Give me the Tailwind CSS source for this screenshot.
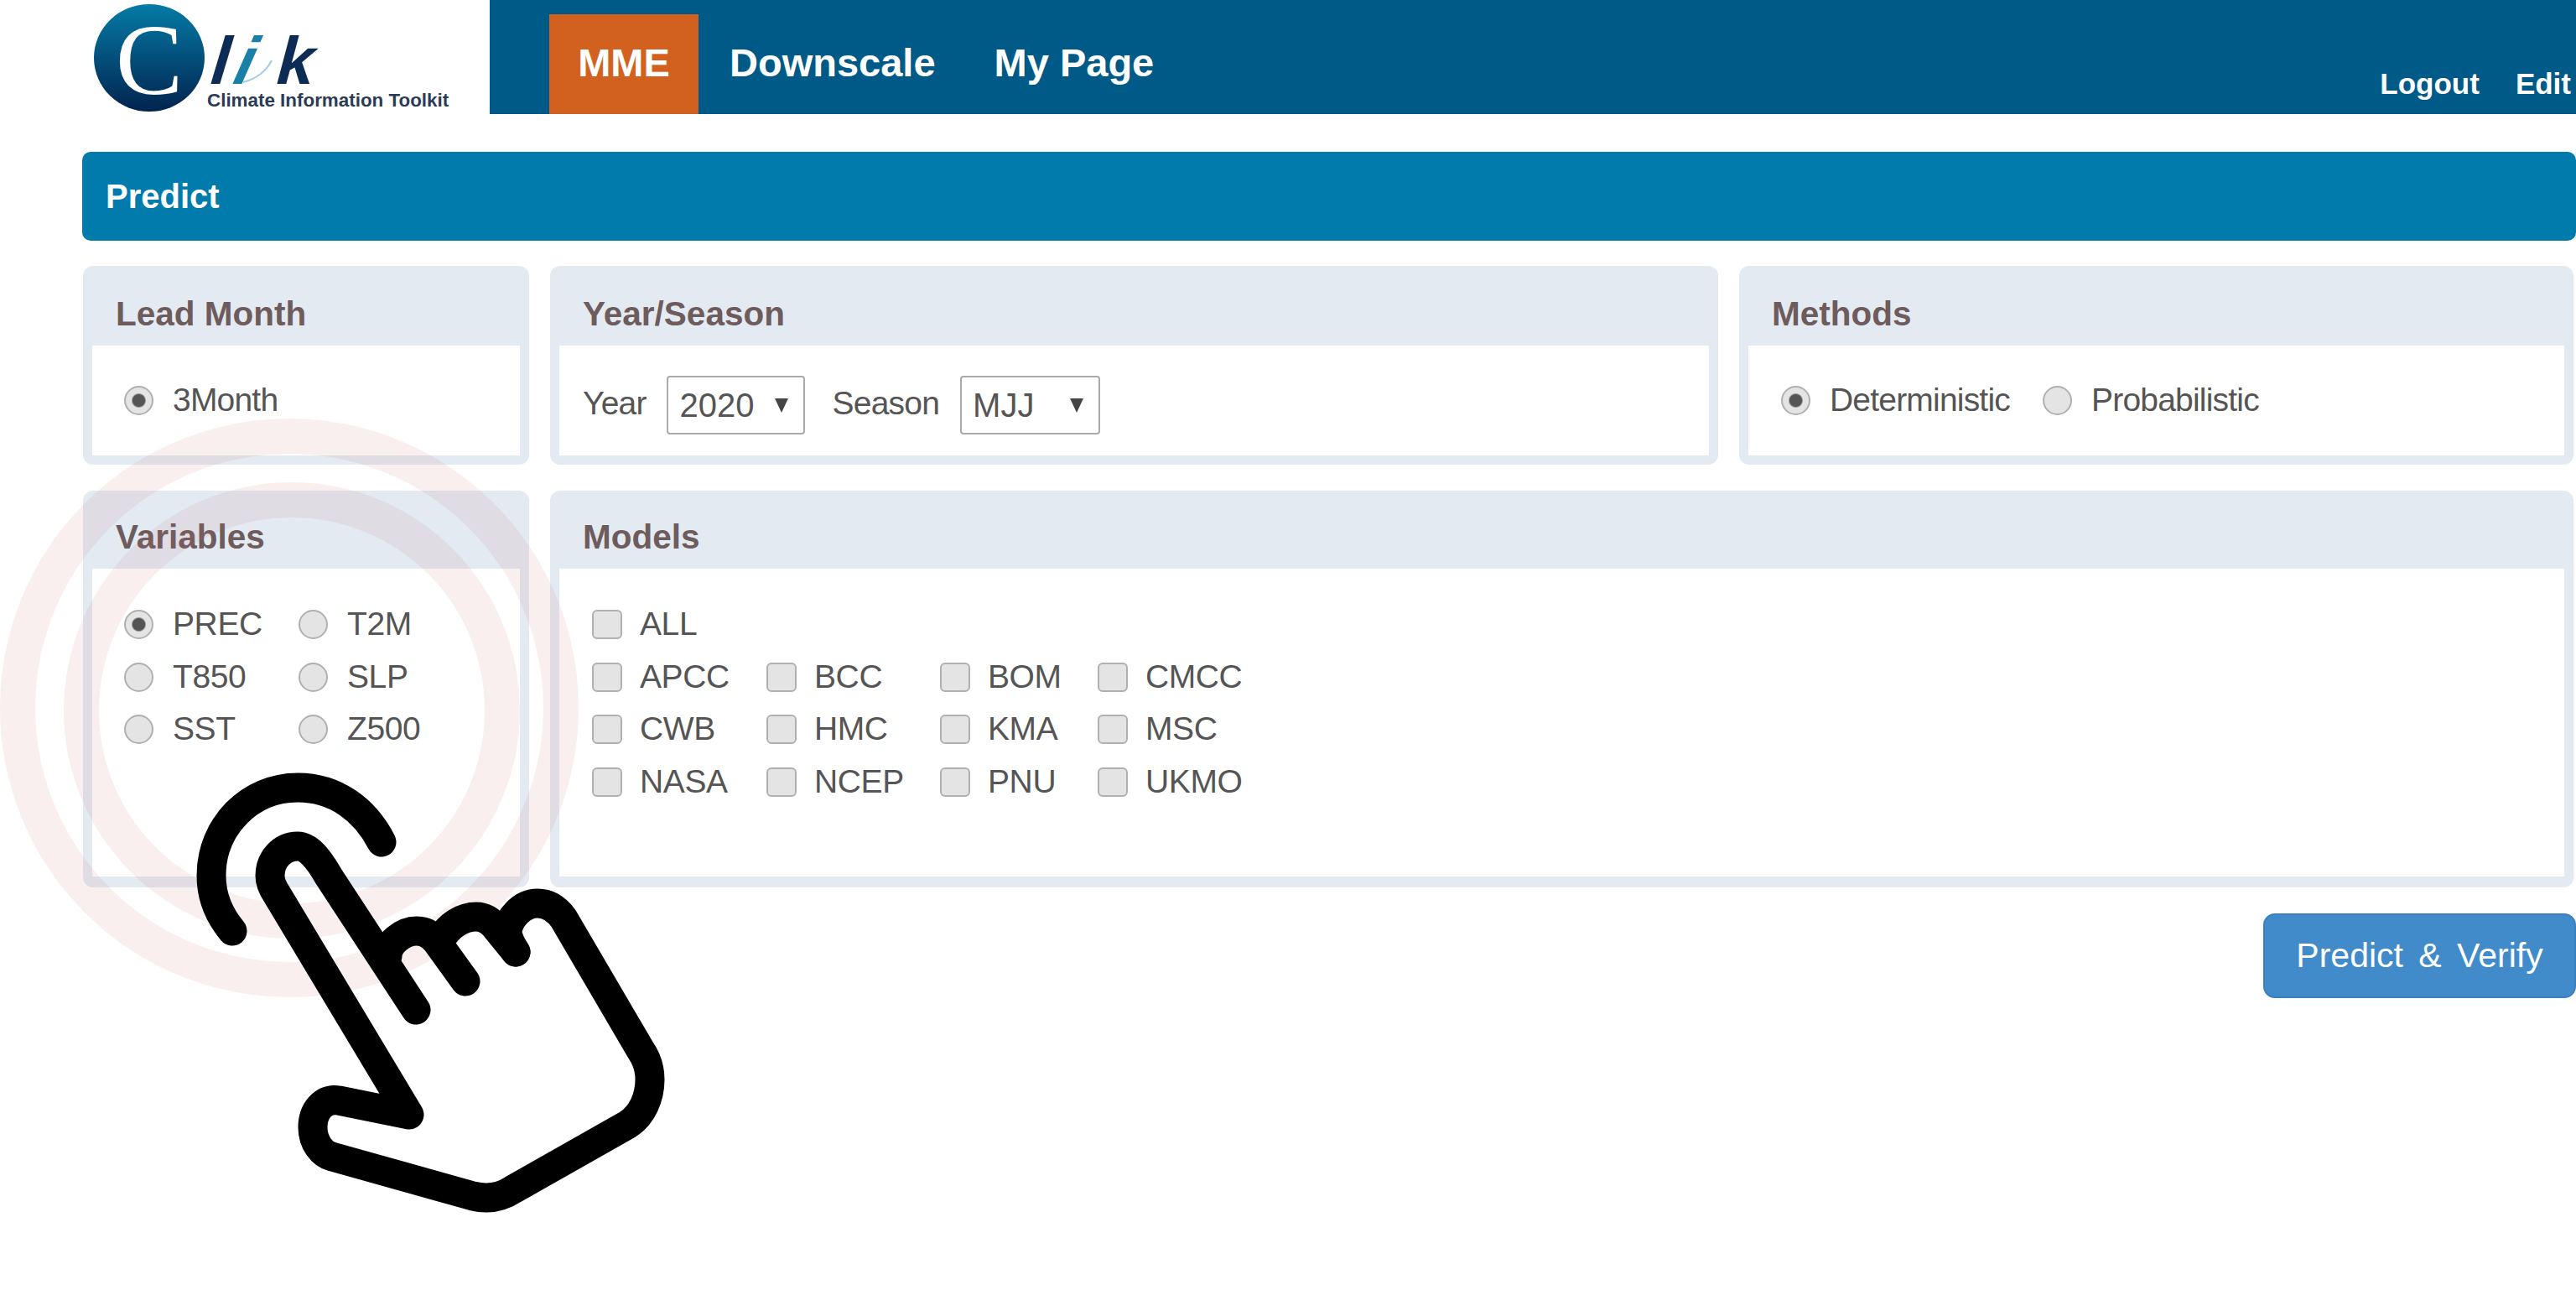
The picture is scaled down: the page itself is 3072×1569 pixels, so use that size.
<!DOCTYPE html>
<html lang="en">
<head>
<meta charset="UTF-8" />
<title>CLIK - Predict</title>
<script src="https://cdn.jsdelivr.net/npm/@tailwindcss/browser@4"></script>
</head>
<body class="relative bg-white overflow-hidden h-[1569px] font-['Liberation_Sans',Arial,sans-serif] text-[39px] tracking-[-0.8px] text-[#555]">

  <!-- Top bar -->
  <header class="flex h-[136px]">
    <div class="w-[584px] shrink-0 bg-white">
      <svg class="tracking-normal" width="584" height="136" viewBox="0 0 584 136">
        <defs>
          <linearGradient id="logoBlue" x1="0" y1="0" x2="0" y2="1">
            <stop offset="0" stop-color="#047ba6" />
            <stop offset="1" stop-color="#02234f" />
          </linearGradient>
        </defs>
        <ellipse cx="178" cy="69" rx="66" ry="64" fill="url(#logoBlue)" />
        <text x="138" y="112" font-family="Liberation Serif" font-size="120" fill="#fff">C</text>
        <path d="M290 98C306 94 318 84 324 72" stroke="#9ccde0" stroke-width="2" fill="none" />
        <text transform="translate(250 100) skewX(-6)" font-family="Liberation Sans" font-style="italic" font-weight="700" font-size="80" fill="#0c2c55">l</text>
        <text transform="translate(276 100) skewX(-14)" font-family="Liberation Sans" font-style="italic" font-weight="700" font-size="80" fill="#1a80a8">i</text>
        <text transform="translate(329 100) skewX(-4)" font-family="Liberation Sans" font-style="italic" font-weight="700" font-size="80" fill="#0c2c55">k</text>
        <text x="247" y="127" font-family="Liberation Sans" font-weight="700" font-size="22.4" fill="#2b3b57">Climate Information Toolkit</text>
      </svg>
    </div>
    <nav class="flex-1 flex bg-[#005a87] text-white font-bold tracking-normal pl-[71px]">
      <a class="mt-[17px] w-[178px] h-[119px] pb-[2px] bg-[#d2611f] text-[47px] flex items-center justify-center">MME</a>
      <a class="mt-[17px] h-[119px] pb-[2px] ml-[37px] text-[47px] flex items-center">Downscale</a>
      <a class="mt-[17px] h-[119px] pb-[2px] ml-[70px] text-[47px] flex items-center">My Page</a>
      <div class="ml-auto flex gap-[43px] self-end pb-[10px] pr-[6px] text-[35px] tracking-normal">
        <a>Logout</a>
        <a>Edit</a>
      </div>
    </nav>
  </header>

  <main class="pl-[99px] pr-[3px] pt-[45px]">
    <div class="-ml-[1px] -mr-[3px] h-[106px] rounded-[10px] bg-[#007bab] pl-[28px] flex items-center text-white font-bold text-[40px] tracking-normal">Predict</div>

    <div class="grid grid-cols-[532px_1393px_995px] gap-x-[25px] gap-y-[31px] mt-[30px]">

      <!-- Lead Month -->
      <section class="h-[237px] flex flex-col rounded-[12px] bg-[#e3eaf2] px-[11px] pb-[11px]">
        <h2 class="h-[95px] shrink-0 pt-[19px] pl-[28px] flex items-center font-bold text-[40.5px] tracking-normal text-[#6e5c5c]">Lead Month</h2>
        <div class="flex-1 bg-white pl-[38px] pt-[48px]">
          <label class="flex items-center gap-[23px] h-[35px]">
            <input type="radio" checked class="appearance-none w-[35px] h-[35px] rounded-full border-2 border-[#b0b0b0] bg-[radial-gradient(circle,#555_0,#555_7px,#e4e4e4_9px,#e4e4e4_100%)]" />
            <span>3Month</span>
          </label>
        </div>
      </section>

      <!-- Year/Season -->
      <section class="h-[237px] flex flex-col rounded-[12px] bg-[#e3eaf2] px-[11px] pb-[11px]">
        <h2 class="h-[95px] shrink-0 pt-[19px] pl-[28px] flex items-center font-bold text-[40.5px] tracking-normal text-[#6e5c5c]">Year/Season</h2>
        <div class="flex-1 bg-white pl-[28px] pt-[36px] flex items-start">
          <span class="h-[70px] flex items-center -mt-[2px]">Year</span>
          <div class="relative ml-[24px] w-[165px] h-[70px]">
            <select class="appearance-none w-full h-full pl-[14px] border-2 border-[#aaa] rounded-[4px] bg-white text-[40px] tracking-normal">
              <option>2020</option>
            </select>
            <svg class="absolute left-[129px] top-[27px]" width="16" height="17" viewBox="0 0 16 17"><path d="M0 0h16L8 17z" fill="#444" /></svg>
          </div>
          <span class="h-[70px] flex items-center -mt-[2px] ml-[33px]">Season</span>
          <div class="relative ml-[25px] w-[167px] h-[70px]">
            <select class="appearance-none w-full h-full pl-[13px] border-2 border-[#aaa] rounded-[4px] bg-white text-[40px] tracking-normal">
              <option>MJJ</option>
            </select>
            <svg class="absolute left-[131px] top-[27px]" width="16" height="17" viewBox="0 0 16 17"><path d="M0 0h16L8 17z" fill="#444" /></svg>
          </div>
        </div>
      </section>

      <!-- Methods -->
      <section class="h-[237px] flex flex-col rounded-[12px] bg-[#e3eaf2] px-[11px] pb-[11px]">
        <h2 class="h-[95px] shrink-0 pt-[19px] pl-[28px] flex items-center font-bold text-[40.5px] tracking-normal text-[#6e5c5c]">Methods</h2>
        <div class="flex-1 bg-white pl-[39px] pt-[48px] flex">
          <label class="flex items-center gap-[23px] h-[35px]">
            <input type="radio" checked class="appearance-none w-[35px] h-[35px] rounded-full border-2 border-[#b0b0b0] bg-[radial-gradient(circle,#555_0,#555_7px,#e4e4e4_9px,#e4e4e4_100%)]" />
            <span>Deterministic</span>
          </label>
          <label class="flex items-center gap-[23px] h-[35px] ml-[39px]">
            <input type="radio" class="appearance-none w-[35px] h-[35px] rounded-full border-2 border-[#b0b0b0] bg-[#e4e4e4]" />
            <span>Probabilistic</span>
          </label>
        </div>
      </section>

      <!-- Variables -->
      <section class="h-[473px] flex flex-col rounded-[12px] bg-[#e3eaf2] px-[11px] pb-[13px]">
        <h2 class="h-[93px] shrink-0 pt-[18px] pl-[28px] flex items-center font-bold text-[40.5px] tracking-normal text-[#6e5c5c]">Variables</h2>
        <div class="flex-1 bg-white pl-[38px] pt-[49px] tracking-[-0.4px]">
          <div class="grid grid-cols-[208px_auto] auto-rows-[62.5px] items-start">
            <label class="flex items-center gap-[23px] h-[35px]"><input type="radio" checked class="appearance-none w-[35px] h-[35px] rounded-full border-2 border-[#b0b0b0] bg-[radial-gradient(circle,#555_0,#555_7px,#e4e4e4_9px,#e4e4e4_100%)]" /><span>PREC</span></label>
            <label class="flex items-center gap-[23px] h-[35px]"><input type="radio" class="appearance-none w-[35px] h-[35px] rounded-full border-2 border-[#b0b0b0] bg-[#e4e4e4]" /><span>T2M</span></label>
            <label class="flex items-center gap-[23px] h-[35px]"><input type="radio" class="appearance-none w-[35px] h-[35px] rounded-full border-2 border-[#b0b0b0] bg-[#e4e4e4]" /><span>T850</span></label>
            <label class="flex items-center gap-[23px] h-[35px]"><input type="radio" class="appearance-none w-[35px] h-[35px] rounded-full border-2 border-[#b0b0b0] bg-[#e4e4e4]" /><span>SLP</span></label>
            <label class="flex items-center gap-[23px] h-[35px]"><input type="radio" class="appearance-none w-[35px] h-[35px] rounded-full border-2 border-[#b0b0b0] bg-[#e4e4e4]" /><span>SST</span></label>
            <label class="flex items-center gap-[23px] h-[35px]"><input type="radio" class="appearance-none w-[35px] h-[35px] rounded-full border-2 border-[#b0b0b0] bg-[#e4e4e4]" /><span>Z500</span></label>
          </div>
        </div>
      </section>

      <!-- Models -->
      <section class="col-span-2 h-[473px] flex flex-col rounded-[12px] bg-[#e3eaf2] px-[11px] pb-[13px]">
        <h2 class="h-[93px] shrink-0 pt-[18px] pl-[28px] flex items-center font-bold text-[40.5px] tracking-normal text-[#6e5c5c]">Models</h2>
        <div class="flex-1 bg-white pl-[39px] pt-[49px] tracking-[-0.4px]">
          <div class="grid grid-cols-[208px_207px_188px_auto] auto-rows-[62.5px] items-start">
            <label class="col-span-4 flex items-center gap-[21px] h-[35px]"><input type="checkbox" class="appearance-none w-[36px] h-[35px] rounded-[6px] border-2 border-[#b0b0b0] bg-[#e4e4e4]" /><span>ALL</span></label>
            <label class="flex items-center gap-[21px] h-[35px]"><input type="checkbox" class="appearance-none w-[36px] h-[35px] rounded-[6px] border-2 border-[#b0b0b0] bg-[#e4e4e4]" /><span>APCC</span></label>
            <label class="flex items-center gap-[21px] h-[35px]"><input type="checkbox" class="appearance-none w-[36px] h-[35px] rounded-[6px] border-2 border-[#b0b0b0] bg-[#e4e4e4]" /><span>BCC</span></label>
            <label class="flex items-center gap-[21px] h-[35px]"><input type="checkbox" class="appearance-none w-[36px] h-[35px] rounded-[6px] border-2 border-[#b0b0b0] bg-[#e4e4e4]" /><span>BOM</span></label>
            <label class="flex items-center gap-[21px] h-[35px]"><input type="checkbox" class="appearance-none w-[36px] h-[35px] rounded-[6px] border-2 border-[#b0b0b0] bg-[#e4e4e4]" /><span>CMCC</span></label>
            <label class="flex items-center gap-[21px] h-[35px]"><input type="checkbox" class="appearance-none w-[36px] h-[35px] rounded-[6px] border-2 border-[#b0b0b0] bg-[#e4e4e4]" /><span>CWB</span></label>
            <label class="flex items-center gap-[21px] h-[35px]"><input type="checkbox" class="appearance-none w-[36px] h-[35px] rounded-[6px] border-2 border-[#b0b0b0] bg-[#e4e4e4]" /><span>HMC</span></label>
            <label class="flex items-center gap-[21px] h-[35px]"><input type="checkbox" class="appearance-none w-[36px] h-[35px] rounded-[6px] border-2 border-[#b0b0b0] bg-[#e4e4e4]" /><span>KMA</span></label>
            <label class="flex items-center gap-[21px] h-[35px]"><input type="checkbox" class="appearance-none w-[36px] h-[35px] rounded-[6px] border-2 border-[#b0b0b0] bg-[#e4e4e4]" /><span>MSC</span></label>
            <label class="flex items-center gap-[21px] h-[35px]"><input type="checkbox" class="appearance-none w-[36px] h-[35px] rounded-[6px] border-2 border-[#b0b0b0] bg-[#e4e4e4]" /><span>NASA</span></label>
            <label class="flex items-center gap-[21px] h-[35px]"><input type="checkbox" class="appearance-none w-[36px] h-[35px] rounded-[6px] border-2 border-[#b0b0b0] bg-[#e4e4e4]" /><span>NCEP</span></label>
            <label class="flex items-center gap-[21px] h-[35px]"><input type="checkbox" class="appearance-none w-[36px] h-[35px] rounded-[6px] border-2 border-[#b0b0b0] bg-[#e4e4e4]" /><span>PNU</span></label>
            <label class="flex items-center gap-[21px] h-[35px]"><input type="checkbox" class="appearance-none w-[36px] h-[35px] rounded-[6px] border-2 border-[#b0b0b0] bg-[#e4e4e4]" /><span>UKMO</span></label>
          </div>
        </div>
      </section>
    </div>

    <div class="flex justify-end mt-[31px] -mr-[3px]">
      <button class="w-[373px] h-[101px] rounded-[14px] border-2 border-[#3a80bf] bg-[#428bca] text-white text-[41px] tracking-normal [word-spacing:7px]">Predict &amp; Verify</button>
    </div>
  </main>

  <!-- Touch gesture overlay -->
  <svg class="absolute left-0 top-0 pointer-events-none" width="3072" height="1569" viewBox="0 0 3072 1569" fill="none" stroke-linecap="round" stroke-linejoin="round">
    <circle cx="345" cy="844" r="324" stroke="#c86060" stroke-opacity="0.1" stroke-width="42" />
    <circle cx="348" cy="847" r="251" stroke="#c86060" stroke-opacity="0.1" stroke-width="42" />
    <g stroke="#000" stroke-width="35">
      <path d="M455 1004C435 965 400 939 355 939C298 939 252 985 252 1044C252 1070 262 1092 277 1110" />
      <path d="M496 1204L392 1045C380 1024 368 1009 355 1009C336 1009 322 1025 322 1044C322 1052 326 1060 330 1066L488 1329L404 1312C385 1309 373 1325 373 1344C373 1362 384 1376 396 1379L564 1426C580 1430 597 1428 612 1418L748 1341C766 1330 775 1308 775 1287C775 1274 771 1262 764 1252L672 1095C664 1084 654 1077 641 1077C622 1077 607 1095 605 1110C605 1118 610 1127 615 1135" />
      <path d="M462 1140C462 1125 480 1110 497 1110C510 1110 518 1118 524 1127L555 1170" />
      <path d="M526 1120C535 1103 552 1093 568 1093C580 1093 588 1101 593 1108L615 1135" />
    </g>
  </svg>
</body>
</html>
